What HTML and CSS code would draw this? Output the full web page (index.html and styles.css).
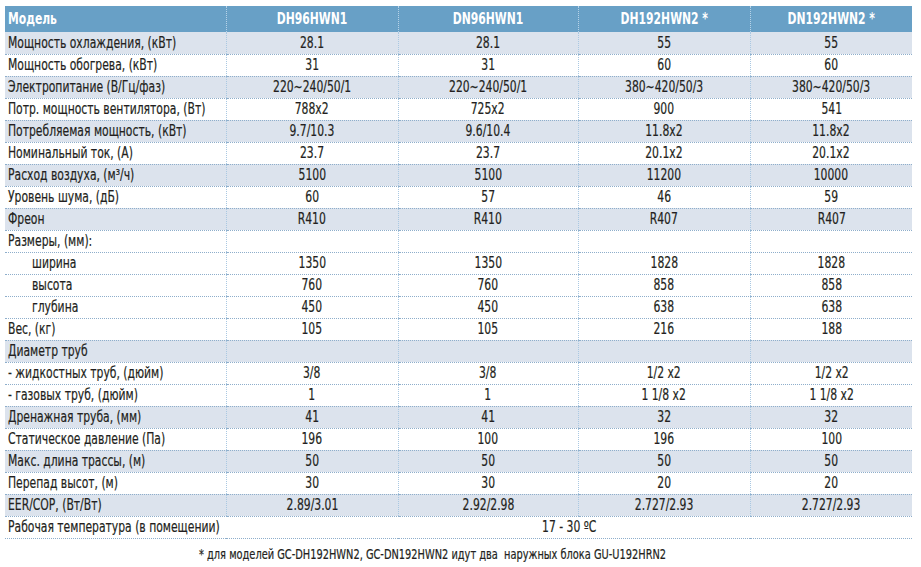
FILE: index.html
```html
<!DOCTYPE html>
<html lang="ru">
<head>
<meta charset="utf-8">
<link rel="stylesheet" href="styles.css">
</head>
<body>
<div class="page">
<table class="specs">
  <colgroup>
    <col class="c0"><col class="c1"><col class="c2"><col class="c3"><col class="c4">
  </colgroup>
  <thead>
    <tr class="head">
      <th class="label"><span class="t">Модель</span></th>
      <th><span class="t">DH96HWN1</span></th>
      <th><span class="t">DN96HWN1</span></th>
      <th><span class="t">DH192HWN2 *</span></th>
      <th><span class="t">DN192HWN2 *</span></th>
    </tr>
  </thead>
  <tbody>
    <tr class="shade"><td class="label"><span class="t">Мощность охлаждения, (кВт)</span></td><td><span class="t">28.1</span></td><td><span class="t">28.1</span></td><td><span class="t">55</span></td><td><span class="t">55</span></td></tr>
    <tr><td class="label"><span class="t">Мощность обогрева, (кВт)</span></td><td><span class="t">31</span></td><td><span class="t">31</span></td><td><span class="t">60</span></td><td><span class="t">60</span></td></tr>
    <tr class="shade"><td class="label"><span class="t">Электропитание (В/Гц/фаз)</span></td><td><span class="t">220~240/50/1</span></td><td><span class="t">220~240/50/1</span></td><td><span class="t">380~420/50/3</span></td><td><span class="t">380~420/50/3</span></td></tr>
    <tr><td class="label"><span class="t">Потр. мощность вентилятора, (Вт)</span></td><td><span class="t">788x2</span></td><td><span class="t">725x2</span></td><td><span class="t">900</span></td><td><span class="t">541</span></td></tr>
    <tr class="shade"><td class="label"><span class="t">Потребляемая мощность, (кВт)</span></td><td><span class="t">9.7/10.3</span></td><td><span class="t">9.6/10.4</span></td><td><span class="t">11.8x2</span></td><td><span class="t">11.8x2</span></td></tr>
    <tr><td class="label"><span class="t">Номинальный ток, (А)</span></td><td><span class="t">23.7</span></td><td><span class="t">23.7</span></td><td><span class="t">20.1x2</span></td><td><span class="t">20.1x2</span></td></tr>
    <tr class="shade"><td class="label"><span class="t">Расход воздуха, (м³/ч)</span></td><td><span class="t">5100</span></td><td><span class="t">5100</span></td><td><span class="t">11200</span></td><td><span class="t">10000</span></td></tr>
    <tr><td class="label"><span class="t">Уровень шума, (дБ)</span></td><td><span class="t">60</span></td><td><span class="t">57</span></td><td><span class="t">46</span></td><td><span class="t">59</span></td></tr>
    <tr class="shade"><td class="label"><span class="t">Фреон</span></td><td><span class="t">R410</span></td><td><span class="t">R410</span></td><td><span class="t">R407</span></td><td><span class="t">R407</span></td></tr>
    <tr><td class="label"><span class="t">Размеры, (мм):</span></td><td></td><td></td><td></td><td></td></tr>
    <tr><td class="label sub"><span class="t">ширина</span></td><td><span class="t">1350</span></td><td><span class="t">1350</span></td><td><span class="t">1828</span></td><td><span class="t">1828</span></td></tr>
    <tr><td class="label sub"><span class="t">высота</span></td><td><span class="t">760</span></td><td><span class="t">760</span></td><td><span class="t">858</span></td><td><span class="t">858</span></td></tr>
    <tr><td class="label sub"><span class="t">глубина</span></td><td><span class="t">450</span></td><td><span class="t">450</span></td><td><span class="t">638</span></td><td><span class="t">638</span></td></tr>
    <tr><td class="label"><span class="t">Вес, (кг)</span></td><td><span class="t">105</span></td><td><span class="t">105</span></td><td><span class="t">216</span></td><td><span class="t">188</span></td></tr>
    <tr class="shade"><td class="label"><span class="t">Диаметр труб</span></td><td></td><td></td><td></td><td></td></tr>
    <tr><td class="label"><span class="t">- жидкостных труб, (дюйм)</span></td><td><span class="t">3/8</span></td><td><span class="t">3/8</span></td><td><span class="t">1/2 x2</span></td><td><span class="t">1/2 x2</span></td></tr>
    <tr><td class="label"><span class="t">- газовых труб, (дюйм)</span></td><td><span class="t">1</span></td><td><span class="t">1</span></td><td><span class="t">1 1/8 x2</span></td><td><span class="t">1 1/8 x2</span></td></tr>
    <tr class="shade"><td class="label"><span class="t">Дренажная труба, (мм)</span></td><td><span class="t">41</span></td><td><span class="t">41</span></td><td><span class="t">32</span></td><td><span class="t">32</span></td></tr>
    <tr><td class="label"><span class="t">Статическое давление (Па)</span></td><td><span class="t">196</span></td><td><span class="t">100</span></td><td><span class="t">196</span></td><td><span class="t">100</span></td></tr>
    <tr class="shade"><td class="label"><span class="t">Макс. длина трассы, (м)</span></td><td><span class="t">50</span></td><td><span class="t">50</span></td><td><span class="t">50</span></td><td><span class="t">50</span></td></tr>
    <tr><td class="label"><span class="t">Перепад высот, (м)</span></td><td><span class="t">30</span></td><td><span class="t">30</span></td><td><span class="t">20</span></td><td><span class="t">20</span></td></tr>
    <tr class="shade"><td class="label"><span class="t">EER/COP, (Вт/Вт)</span></td><td><span class="t">2.89/3.01</span></td><td><span class="t">2.92/2.98</span></td><td><span class="t">2.727/2.93</span></td><td><span class="t">2.727/2.93</span></td></tr>
    <tr><td class="label"><span class="t">Рабочая температура (в помещении)</span></td><td colspan="4" class="span"><span class="t">17 - 30 ºC</span></td></tr>
  </tbody>
</table>
<p class="note"><span class="t">* для моделей GC-DH192HWN2, GC-DN192HWN2 идут два&nbsp; наружных блока GU-U192HRN2</span></p>
</div>
</body>
</html>
```
FILE: styles.css
```css
html, body {
  margin: 0;
  padding: 0;
  background: #ffffff;
}

.page {
  padding: 6px 9px 0 5px;
  font-family: "DejaVu Sans Condensed", "Liberation Sans Narrow", "Liberation Sans", sans-serif;
  color: #231f20;
  -webkit-text-stroke: 0.2px #231f20;
}

.t {
  display: inline-block;
  transform: scaleX(0.75);
  transform-origin: center;
}

.specs {
  width: 907px;
  border-collapse: collapse;
  table-layout: fixed;
  font-size: 16px;
}

.c0 { width: 221px; }
.c1 { width: 172px; }
.c2 { width: 180px; }
.c3 { width: 172px; }
.c4 { width: 162px; }

.specs th,
.specs td {
  height: 22px;
  padding: 0;
  text-align: center;
  white-space: nowrap;
  line-height: 20px;
  border-bottom: 1px dotted #8eaecb;
  border-left: 1px dotted #a9c8e2;
  box-sizing: border-box;
  overflow: visible;
}

.specs .label {
  text-align: left;
  padding-left: 3px;
  border-left: none;
}

.specs .label .t {
  transform-origin: left center;
}

.specs .sub {
  padding-left: 27px;
}

.head th {
  height: 26px;
  background: #68a0c6;
  color: #ffffff;
  -webkit-text-stroke: 0;
  font-weight: bold;
  font-size: 16px;
  border-left: 1px dotted #b7d3e8;
  border-bottom: none;
}

.head th.label {
  border-left: none;
}

.shade td {
  background: #dce3ed;
}

.span {
  text-align: center;
  border-left: none !important;
}

.note {
  margin: 7px 0 0 194px;
  font-size: 14px;
  line-height: 16px;
}

.note .t {
  transform: scaleX(0.78);
  transform-origin: left center;
}
```
